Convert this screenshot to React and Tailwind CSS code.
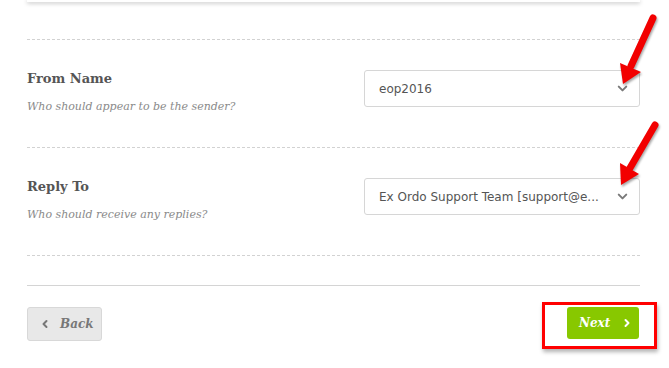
import { ChevronDown, ChevronLeft, ChevronRight } from "lucide-react"

const serif = "font-['DejaVu_Serif','Liberation_Serif',serif]"

const Field = ({ label, hint, value }) => {
    return (
        <div className="flex h-[108px] border-t border-dashed border-[#d2d2d2]">
            <div className="grow pt-[29px]">
                <p className={`${serif} text-[13px] leading-[20px] font-bold text-[#555]`}>{label}</p>
                <p className={`${serif} mt-[9px] text-[11px] leading-[18px] italic text-[#8a8a8a]`}>{hint}</p>
            </div>
            <div className="pt-[30px]">
                <div className="flex items-center w-[276px] h-[37px] border border-[#d6d6d6] rounded-[3px] bg-white pl-[14px] pr-[9px]">
                    <span className="grow whitespace-nowrap font-['DejaVu_Sans','Verdana',sans-serif] text-[12px] text-[#555]">{value}</span>
                    <ChevronDown size={15} strokeWidth={3.2} className="text-[#7a7a7a] ml-2 shrink-0" />
                </div>
            </div>
        </div>
    )
}

const Arrows = () => {
    return (
        <svg className="absolute inset-0 pointer-events-none drop-shadow-[1px_2px_1px_rgba(0,0,0,0.35)]" width="669" height="368">
            <line x1="653" y1="18" x2="631" y2="66" stroke="#f20000" strokeWidth="7" strokeLinecap="round" />
            <polygon points="623,84 620,63 641,72" fill="#f20000" />
            <line x1="655" y1="125" x2="630" y2="168" stroke="#f20000" strokeWidth="7" strokeLinecap="round" />
            <polygon points="621,185 620,163 639,174" fill="#f20000" />
        </svg>
    )
}

export default function App() {
    return (
        <div className="relative w-[669px] h-[368px] bg-white overflow-hidden">

            <div className="ml-[27px] w-[613px]">

                {/* card above */}
                <div className="h-[2px] bg-white shadow-[0_1px_4px_rgba(0,0,0,0.35)]"></div>

                <div className="h-[37px]"></div>

                <Field label="From Name" hint="Who should appear to be the sender?" value="eop2016" />
                <Field label="Reply To" hint="Who should receive any replies?" value="Ex Ordo Support Team [support@e..." />

                <div className="border-t border-dashed border-[#d2d2d2] h-[30px]"></div>
                <div className="h-px bg-[#d4d4d4]"></div>

                <div className="flex justify-between items-start mt-[21px]">
                    <button className={`${serif} flex items-center h-[34px] w-[75px] pl-[11px] gap-[9px] bg-[#e8e8e8] border border-[#d8d8d8] rounded-[3px] text-[#777] text-[12px] font-bold italic`}>
                        <ChevronLeft size={12} strokeWidth={4} />
                        Back
                    </button>
                    <button className={`${serif} flex items-center h-[32px] w-[72px] mr-px pl-[12px] gap-[11px] bg-[#88c800] rounded-[3px] text-white text-[12px] font-bold italic`}>
                        Next
                        <ChevronRight size={12} strokeWidth={4} />
                    </button>
                </div>
            </div>

            {/* annotation box */}
            <div className="absolute left-[542px] top-[302px] w-[115px] h-[47px] border-[3px] border-[#ff0000] shadow-[1px_3px_4px_rgba(0,0,0,0.3)]"></div>

            <Arrows />
        </div>
    )
}
